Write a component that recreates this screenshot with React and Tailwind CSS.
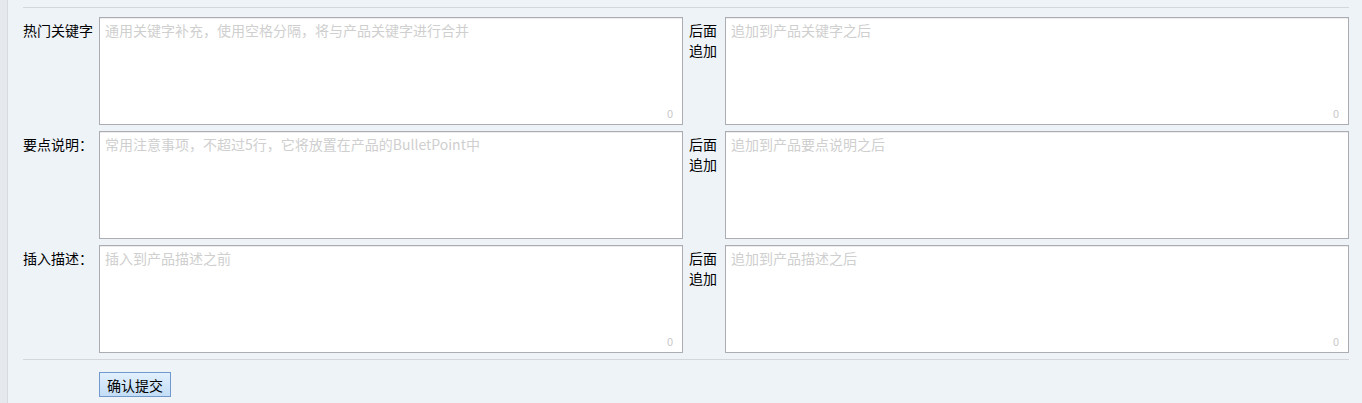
import React from 'react';

const rows = [
  {
    label: '热门关键字',
    before: '通用关键字补充，使用空格分隔，将与产品关键字进行合并',
    after: '追加到产品关键字之后',
    counter: true,
  },
  {
    label: '要点说明：',
    before: '常用注意事项，不超过5行，它将放置在产品的BulletPoint中',
    after: '追加到产品要点说明之后',
    counter: false,
  },
  {
    label: '插入描述：',
    before: '插入到产品描述之前',
    after: '追加到产品描述之后',
    counter: true,
  },
];

function Box({ placeholder, counter, className }) {
  return (
    <div className={`relative h-[108px] ${className}`}>
      <textarea
        placeholder={placeholder}
        className="block h-full w-full resize-none border border-[#abadb3] bg-white px-[5px] pt-[2px] text-[14px] leading-[20px] text-[#333] shadow-[inset_0_1px_0_#ececec] outline-none placeholder:text-[#cfcfcf]"
      />
      {counter && (
        <span className="absolute bottom-[6px] right-[10px] text-[11px] leading-[12px] text-[#c9c9c9]">0</span>
      )}
    </div>
  );
}

export default function App() {
  return (
    <div
      className="flex min-h-[403px] bg-[#eef3f8] text-black"
      style={{ fontFamily: '"Noto Sans CJK SC", "Noto Sans", sans-serif' }}
    >
      <div className="w-[8px] shrink-0 border-r border-[#d6dbe1] bg-[#e5e9ed]" />
      <div className="flex-1 pl-[15px] pr-[13px] pt-[7px]">
        <div className="border-t border-[#d3d6da]" />
        <div className="mt-[9px] flex flex-col gap-[6px]">
          {rows.map((row) => (
            <div key={row.label} className="flex">
              <div className="w-[76px] shrink-0 pt-[3px] text-[14px] leading-[20px]">{row.label}</div>
              <Box placeholder={row.before} counter={row.counter} className="w-[584px] shrink-0" />
              <div className="ml-[6px] w-[36px] shrink-0 pt-[3px] text-[14px] leading-[20px]">
                后面
                <br />
                追加
              </div>
              <Box placeholder={row.after} counter={row.counter} className="flex-1" />
            </div>
          ))}
        </div>
        <div className="mt-[6px] border-t border-[#d3d6da]" />
        <div className="flex pl-[76px] pt-[12px]">
          <button className="flex h-[25px] w-[72px] items-center justify-center border border-[#7199cc] bg-gradient-to-b from-[#e2f0fd] to-[#c3ddf6] text-[14px] leading-[20px]">
            确认提交
          </button>
        </div>
      </div>
    </div>
  );
}
